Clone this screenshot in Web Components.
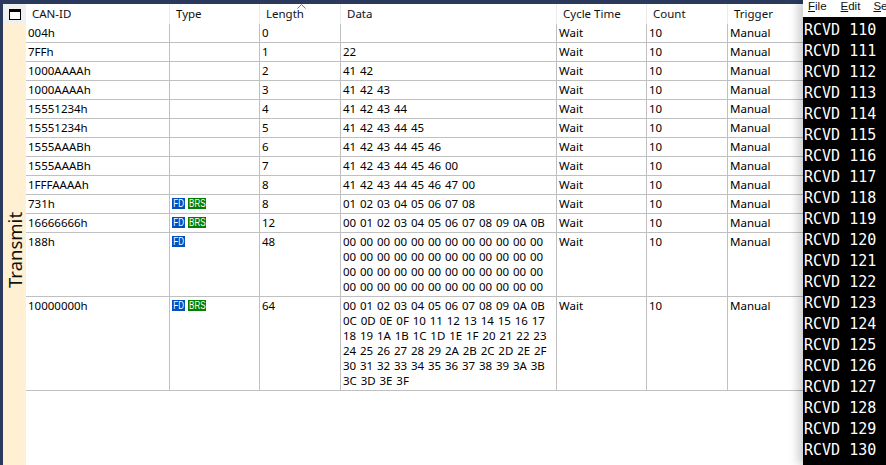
<!DOCTYPE html>
<html>
<head>
<meta charset="utf-8">
<style>
	html, body { margin: 0; height: 100%; overflow: hidden; background: #fff; }
	body { display: flex; font-family: "Noto Sans", "Open Sans", sans-serif; }
</style>
</head>
<body>
<transmit-panel>
	<msg-row id-text="004h" len="0"></msg-row>
	<msg-row id-text="7FFh" len="1" data="22"></msg-row>
	<msg-row id-text="1000AAAAh" len="2" data="41 42"></msg-row>
	<msg-row id-text="1000AAAAh" len="3" data="41 42 43"></msg-row>
	<msg-row id-text="15551234h" len="4" data="41 42 43 44"></msg-row>
	<msg-row id-text="15551234h" len="5" data="41 42 43 44 45"></msg-row>
	<msg-row id-text="1555AAABh" len="6" data="41 42 43 44 45 46"></msg-row>
	<msg-row id-text="1555AAABh" len="7" data="41 42 43 44 45 46 00"></msg-row>
	<msg-row id-text="1FFFAAAAh" len="8" data="41 42 43 44 45 46 47 00"></msg-row>
	<msg-row id-text="731h" len="8" data="01 02 03 04 05 06 07 08" flags="FD BRS"></msg-row>
	<msg-row id-text="16666666h" len="12" data="00 01 02 03 04 05 06 07 08 09 0A 0B" flags="FD BRS"></msg-row>
	<msg-row id-text="188h" len="48" flags="FD" data="00 00 00 00 00 00 00 00 00 00 00 00 00 00 00 00 00 00 00 00 00 00 00 00 00 00 00 00 00 00 00 00 00 00 00 00 00 00 00 00 00 00 00 00 00 00 00 00"></msg-row>
	<msg-row id-text="10000000h" len="64" flags="FD BRS" data="00 01 02 03 04 05 06 07 08 09 0A 0B 0C 0D 0E 0F 10 11 12 13 14 15 16 17 18 19 1A 1B 1C 1D 1E 1F 20 21 22 23 24 25 26 27 28 29 2A 2B 2C 2D 2E 2F 30 31 32 33 34 35 36 37 38 39 3A 3B 3C 3D 3E 3F"></msg-row>
</transmit-panel>
<term-window></term-window>

<script>
	// Same column widths for header and rows
	const COLUMNS = '144px 90px 81px 216px 90px 81px 1fr';

	customElements.define(
		'flag-badge',
		class extends HTMLElement {
			constructor() {
				super();
				this.attachShadow({ mode: 'open' });
				this.shadowRoot.innerHTML = `
					<style>
						:host {
							display: flex;
							justify-content: center;
							width: var(--badge-w, 13px);
							height: 11px;
							background: var(--badge-bg, #0050c0);
							color: #fff;
							font: 10px/11px "Liberation Sans", sans-serif;
						}
						/* No narrow font installed, so squeeze it */
						span { flex: none; transform: scaleX(0.8); }
					</style>
					<span><slot></slot></span>
				`;
			}
		}
	);

	customElements.define(
		'msg-row',
		class extends HTMLElement {
			constructor() {
				super();
				this.attachShadow({ mode: 'open' });
			}

			connectedCallback() {
				const attr = (name) => this.getAttribute(name) || '';
				const flags = attr('flags').split(' ').filter(Boolean).map((f) =>
					f === 'BRS'
						? `<flag-badge style="--badge-bg:#008000;--badge-w:18px">${f}</flag-badge>`
						: `<flag-badge>${f}</flag-badge>`
				).join('');
				this.shadowRoot.innerHTML = `
					<style>
						:host {
							display: grid;
							grid-template-columns: ${COLUMNS};
							border-bottom: 1px solid #c0c0c0;
						}
						div {
							box-sizing: border-box;
							padding: 0 2px;
							min-height: 18px;
							border-right: 1px solid #c0c0c0;
							font-size: 11.5px;
							line-height: 18px;
							color: #000;
						}
						.flags { display: flex; align-items: flex-start; gap: 3px; padding-top: 3px; }
						.data { line-height: 15px; padding: 1px 2px 2px; word-spacing: 0.85px; }
					</style>
					<div>${attr('id-text')}</div>
					<div class="flags">${flags}</div>
					<div>${attr('len')}</div>
					<div class="data">${attr('data')}</div>
					<div>Wait</div>
					<div>10</div>
					<div style="border-right:0">Manual</div>
				`;
			}
		}
	);

	customElements.define(
		'transmit-panel',
		class extends HTMLElement {
			constructor() {
				super();
				this.attachShadow({ mode: 'open' });
				this.shadowRoot.innerHTML = `
					<style>
						:host {
							display: flex;
							flex-direction: column;
							flex: 1;
							min-width: 0;
							background: #2b3a5c;
							padding: 4px 0 0 3px;
						}
						.body { display: flex; flex: 1; background: #fff; }
						.side {
							width: 23px;
							flex: none;
							display: flex;
							flex-direction: column;
							background: #fff0d4;
						}
						.corner {
							height: 20px;
							background: #f0f0f0;
							display: flex;
							align-items: center;
							justify-content: center;
						}
						.label {
							flex: 1;
							display: flex;
							align-items: center;
							justify-content: center;
							padding-bottom: 11px;
							writing-mode: vertical-rl;
							transform: rotate(180deg);
							font-size: 18.5px;
							color: #111;
						}
						.main { flex: 1; min-width: 0; }
						.head {
							position: relative;
							display: grid;
							grid-template-columns: ${COLUMNS};
							height: 20px;
							font-size: 11.5px;
							line-height: 20px;
							color: #111;
						}
						.head span { padding-left: 6px; border-right: 1px solid #ececec; }
						.head span:last-of-type { border-right: 0; }
						.sort { position: absolute; left: 271px; top: 0; }
					</style>
					<div class="body">
						<div class="side">
							<div class="corner">
								<svg width="12" height="11" viewBox="0 0 12 11">
									<rect x="0.5" y="0.5" width="11" height="10" fill="#fff" stroke="#000"></rect>
									<rect x="0" y="0" width="12" height="3" fill="#000"></rect>
								</svg>
							</div>
							<div class="label">Transmit</div>
						</div>
						<div class="main">
							<div class="head">
								<span>CAN-ID</span><span>Type</span><span>Length</span><span>Data</span>
								<span>Cycle Time</span><span>Count</span><span>Trigger</span>
								<svg class="sort" width="9" height="5" viewBox="0 0 9 5">
									<path d="M0.5 4.5 L4.5 0.5 L8.5 4.5" fill="none" stroke="#777"></path>
								</svg>
							</div>
							<slot></slot>
						</div>
					</div>
				`;
			}
		}
	);

	customElements.define(
		'term-window',
		class extends HTMLElement {
			constructor() {
				super();
				this.attachShadow({ mode: 'open' });
				let lines = '';
				for (let n = 110; n <= 130; n++) lines += `<div>RCVD ${n}</div>`;
				this.shadowRoot.innerHTML = `
					<style>
						:host {
							display: flex;
							flex-direction: column;
							flex: none;
							width: 83px;
							overflow: hidden;
							background: #000;
							box-shadow: -5px 0 9px rgba(0, 0, 0, 0.2);
							z-index: 1;
						}
						.menu {
							flex: none;
							display: flex;
							gap: 14px;
							height: 17px;
							padding-left: 5px;
							background: #fff;
							font: 11.5px "Liberation Sans", sans-serif;
							white-space: nowrap;
							box-sizing: border-box;
							color: #111;
						}
						.menu span:last-child { margin-left: -1px; }
						u { text-underline-offset: 1px; }
						.out {
							padding: 3px 0 0 1px;
							color: #fff;
							font: 15px/21px "DejaVu Sans Mono", monospace;
							white-space: pre;
						}
					</style>
					<div class="menu"><span><u>F</u>ile</span><span><u>E</u>dit</span><span><u>S</u>e</span></div>
					<div class="out">${lines}</div>
				`;
			}
		}
	);
</script>
</body>
</html>
